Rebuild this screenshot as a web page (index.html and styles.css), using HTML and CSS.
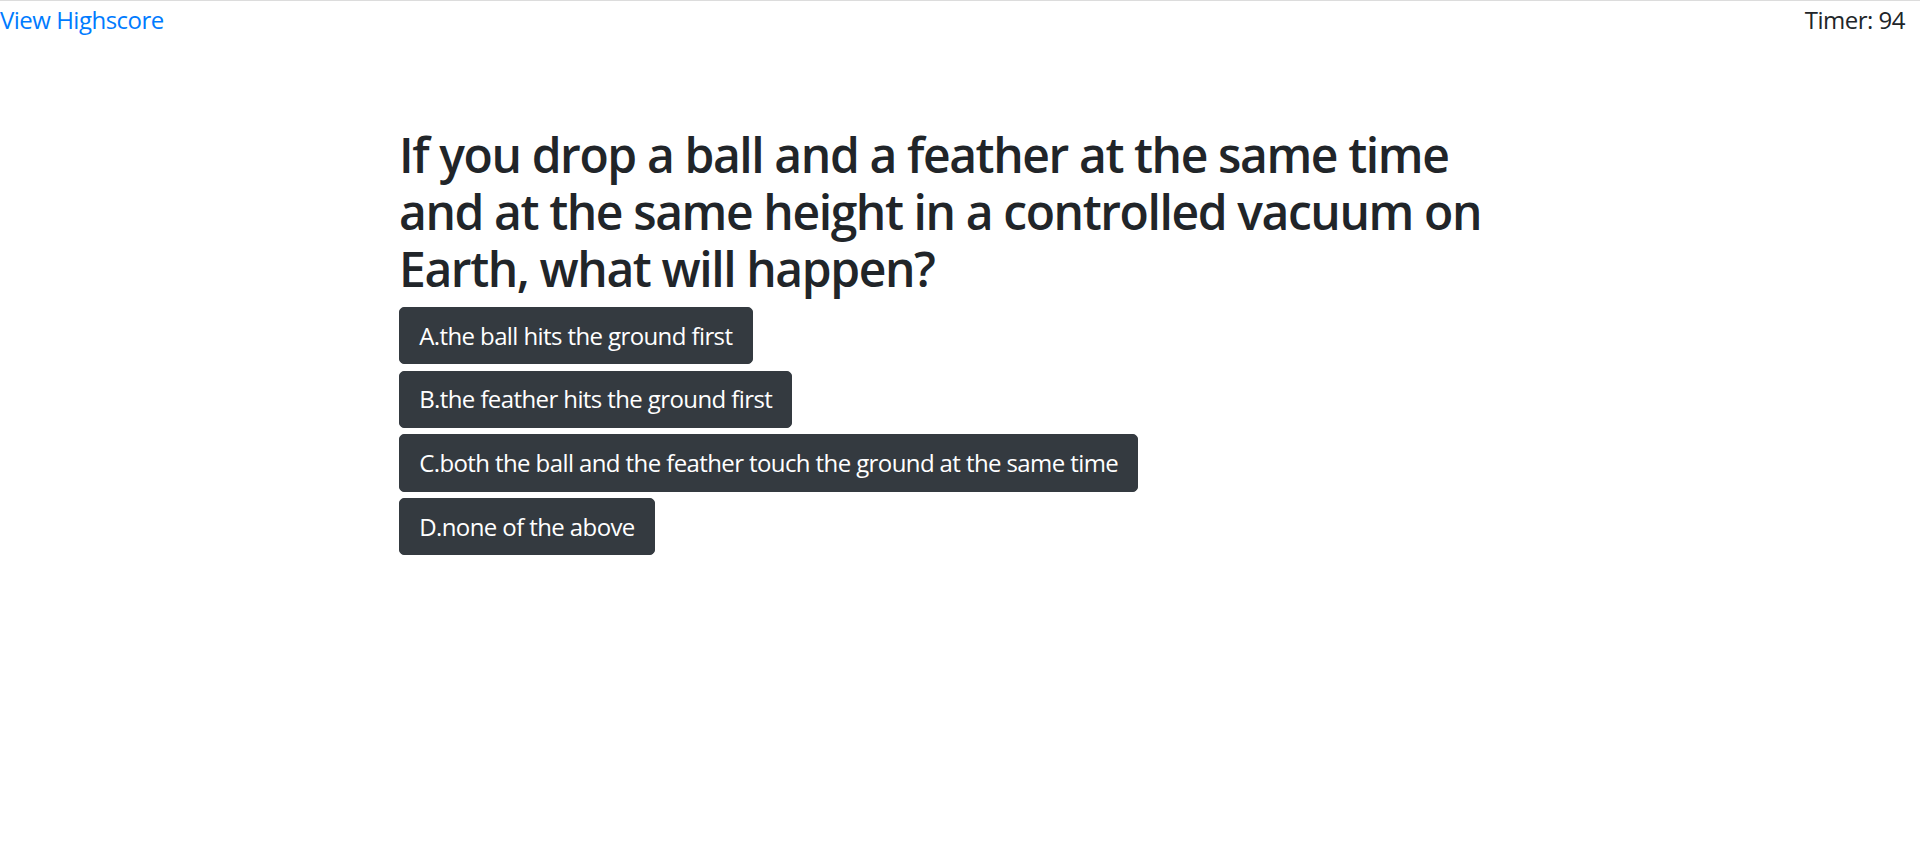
FILE: index.html
```html
<!DOCTYPE html>
<html lang="en">
<head>
<meta charset="utf-8">
<title>Quiz</title>
<link rel="stylesheet" href="styles.css">
</head>
<body>
<header class="topbar">
  <a class="highscore-link" href="#">View Highscore</a>
  <span class="timer">Timer: 94</span>
</header>
<main class="quiz">
  <h1 class="question">If you drop a ball and a feather at the same time and at the same height in a controlled vacuum on Earth, what will happen?</h1>
  <div class="answers">
    <button class="answer">A.the ball hits the ground first</button>
    <button class="answer">B.the feather hits the ground first</button>
    <button class="answer">C.both the ball and the feather touch the ground at the same time</button>
    <button class="answer">D.none of the above</button>
  </div>
</main>
</body>
</html>
```
FILE: styles.css
```css
html, body {
  margin: 0;
  padding: 0;
  background: #ffffff;
}
body {
  font-family: "Open Sans", "Noto Sans", sans-serif;
  color: #212529;
  font-size: 24px;
  line-height: 1.5;
  letter-spacing: -0.5px;
  border-top: 1px solid #dcdcdc;
}
.topbar {
  display: flex;
  justify-content: space-between;
  align-items: flex-start;
  padding: 1px 15px 0 0;
}
.highscore-link {
  color: #007bff;
  text-decoration: none;
}
.timer {
  color: #212529;
}
.quiz {
  padding: 88px 0 0 399px;
}
.question {
  width: 1122px;
  margin: 0 0 9.6px 0;
  font-size: 48px;
  font-weight: 600;
  line-height: 1.19;
  letter-spacing: -1.4px;
  color: #212529;
}
.answers {
  display: flex;
  flex-direction: column;
  align-items: flex-start;
  gap: 6.6px;
}
.answer {
  font-family: inherit;
  font-size: 24px;
  line-height: 36px;
  letter-spacing: -0.6px;
  padding: 9.6px 19.2px;
  border: 1px solid #343a40;
  border-radius: 5px;
  background: #343a40;
  color: #ffffff;
  cursor: pointer;
}
```
